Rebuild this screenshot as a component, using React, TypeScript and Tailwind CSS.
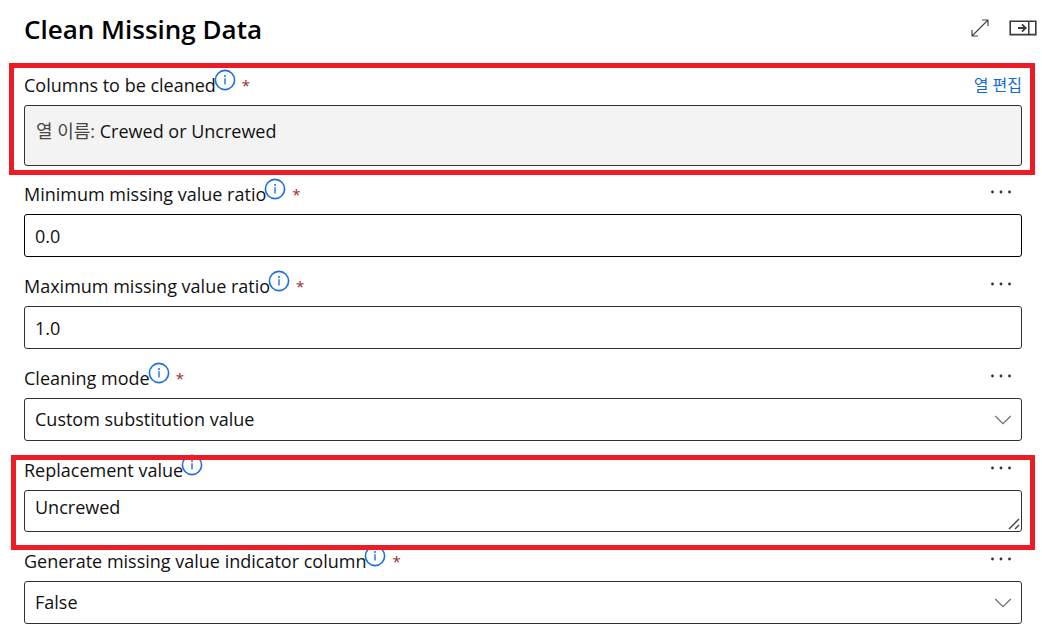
import type { ReactNode } from "react";

const boxClass =
  "block w-full rounded-[3px] border bg-white px-[10px] text-lg text-[#111111] outline-none";

function InfoIcon() {
  return (
    <svg viewBox="0 0 22 22" className="h-[22px] w-[22px]" fill="none" aria-hidden="true">
      <circle cx="11" cy="11" r="9.6" stroke="#1a6fe0" strokeWidth="1.6" />
      <path d="M11 9.2V15.4" stroke="#1a6fe0" strokeWidth="1.4" />
      <circle cx="11" cy="6.9" r="1" fill="#1a6fe0" />
    </svg>
  );
}

function MoreButton({ name }: { name: string }) {
  return (
    <button type="button" aria-label={`More options for ${name}`} className="mr-[9px] flex h-5 items-center">
      <svg viewBox="0 0 24 6" className="h-[6px] w-6" fill="#323130" aria-hidden="true">
        <circle cx="3.5" cy="3" r="1.4" />
        <circle cx="12" cy="3" r="1.4" />
        <circle cx="20.5" cy="3" r="1.4" />
      </svg>
    </button>
  );
}

function Chevron() {
  return (
    <svg
      viewBox="0 0 18 10"
      className="pointer-events-none col-start-1 row-start-1 mr-[10px] h-[10px] w-[18px] self-center justify-self-end"
      fill="none"
      aria-hidden="true"
    >
      <path d="M1.2 1L9 8.6L16.8 1" stroke="#706e6c" strokeWidth="1.2" />
    </svg>
  );
}

type FieldProps = {
  id: string;
  label: string;
  required?: boolean;
  action?: ReactNode;
  children: ReactNode;
};

function Field({ id, label, required, action, children }: FieldProps) {
  return (
    <div>
      <div className="flex h-8 items-start justify-between">
        <div className="flex items-start">
          <label htmlFor={id} className="text-lg leading-6 whitespace-nowrap">
            {label}
          </label>
          <button type="button" aria-label={`About ${label}`} className="-mt-1 -ml-[2px]">
            <InfoIcon />
          </button>
          {required && <span className="ml-[6px] text-[15px] leading-6 text-[#a4262c]">*</span>}
        </div>
        {action ?? <MoreButton name={label} />}
      </div>
      {children}
    </div>
  );
}

function SelectBox({ id, options }: { id: string; options: string[] }) {
  return (
    <div className="grid">
      <select id={id} className={`${boxClass} col-start-1 row-start-1 h-[43px] appearance-none border-[#323130] pb-[2px]`}>
        {options.map((option) => (
          <option key={option}>{option}</option>
        ))}
      </select>
      <Chevron />
    </div>
  );
}

export default function App() {
  return (
    <main className="min-h-screen bg-white pb-5 font-['Segoe_UI','Open_Sans','Noto_Sans_CJK_KR',sans-serif] text-[#111111]">
      <header className="flex h-[73px] items-start justify-between pt-3 pr-[5px] pl-6">
        <h1 className="text-[26px] leading-[34px] font-semibold text-black">Clean Missing Data</h1>
        <div className="flex h-8 items-center gap-5">
          <button type="button" aria-label="Expand">
            <svg viewBox="0 0 18 18" className="h-[18px] w-[18px]" fill="none" stroke="#4a4846" strokeWidth="1.2" aria-hidden="true">
              <path d="M1 17L17 1M11 1H17V7M1 11V17H7" />
            </svg>
          </button>
          <button type="button" aria-label="Collapse panel">
            <svg viewBox="0 0 28 16" className="h-4 w-7" fill="none" stroke="#3b3a39" aria-hidden="true">
              <path d="M1.2 1.2H26.8V14.6H1.2Z" strokeWidth="1.6" />
              <path d="M19.8 1V15" strokeWidth="1.5" />
              <path d="M9 8H16.5M13 4.3L16.7 8L13 11.7" strokeWidth="1.8" />
            </svg>
          </button>
        </div>
      </header>

      <form className="flex flex-col gap-[17px] pr-5 pl-6">
        <div className="relative -mb-px">
          <Field
            id="columns"
            label="Columns to be cleaned"
            required
            action={
              <a href="#columns" className="text-base leading-6 text-[#1268dc]">
                열 편집
              </a>
            }
          >
            <output
              id="columns"
              className="block h-[61px] w-full rounded-[3px] border border-[#323130] bg-[#f3f3f3] px-[11px] pt-3 text-lg leading-[26px]"
            >
              <span className="text-[#484644]">열 이름:</span> Crewed or Uncrewed
            </output>
          </Field>
          <div className="pointer-events-none absolute -top-[10px] -right-[13px] -bottom-[9px] -left-[15px] border-5 border-[#ed1c24]" />
        </div>

        <Field id="minimum" label="Minimum missing value ratio" required>
          <input id="minimum" type="text" defaultValue="0.0" className={`${boxClass} h-[43px] border-black`} />
        </Field>

        <Field id="maximum" label="Maximum missing value ratio" required>
          <input id="maximum" type="text" defaultValue="1.0" className={`${boxClass} h-[43px] border-[#323130]`} />
        </Field>

        <Field id="mode" label="Cleaning mode" required>
          <SelectBox id="mode" options={["Custom substitution value", "Remove entire row"]} />
        </Field>

        <div className="relative z-10">
          <Field id="replacement" label="Replacement value">
            <div className="grid">
              <textarea
                id="replacement"
                defaultValue="Uncrewed"
                className={`${boxClass} col-start-1 row-start-1 h-[42px] resize-y overflow-hidden border-[#323130] pt-1 leading-6 [&::-webkit-resizer]:bg-transparent`}
              />
              <svg
                viewBox="0 0 12 12"
                className="pointer-events-none relative col-start-1 row-start-1 mr-[2px] mb-[2px] h-3 w-3 self-end justify-self-end"
                fill="none"
                stroke="#4a4846"
                strokeWidth="1.5"
                aria-hidden="true"
              >
                <path d="M1 11L11 1M7 11L11 7" />
              </svg>
            </div>
          </Field>
          <div className="pointer-events-none absolute -top-[3px] -right-[13px] -bottom-[18px] -left-[13px] border-5 border-[#ed1c24]" />
        </div>

        <Field id="indicator" label="Generate missing value indicator column" required>
          <SelectBox id="indicator" options={["False", "True"]} />
        </Field>
      </form>
    </main>
  );
}
